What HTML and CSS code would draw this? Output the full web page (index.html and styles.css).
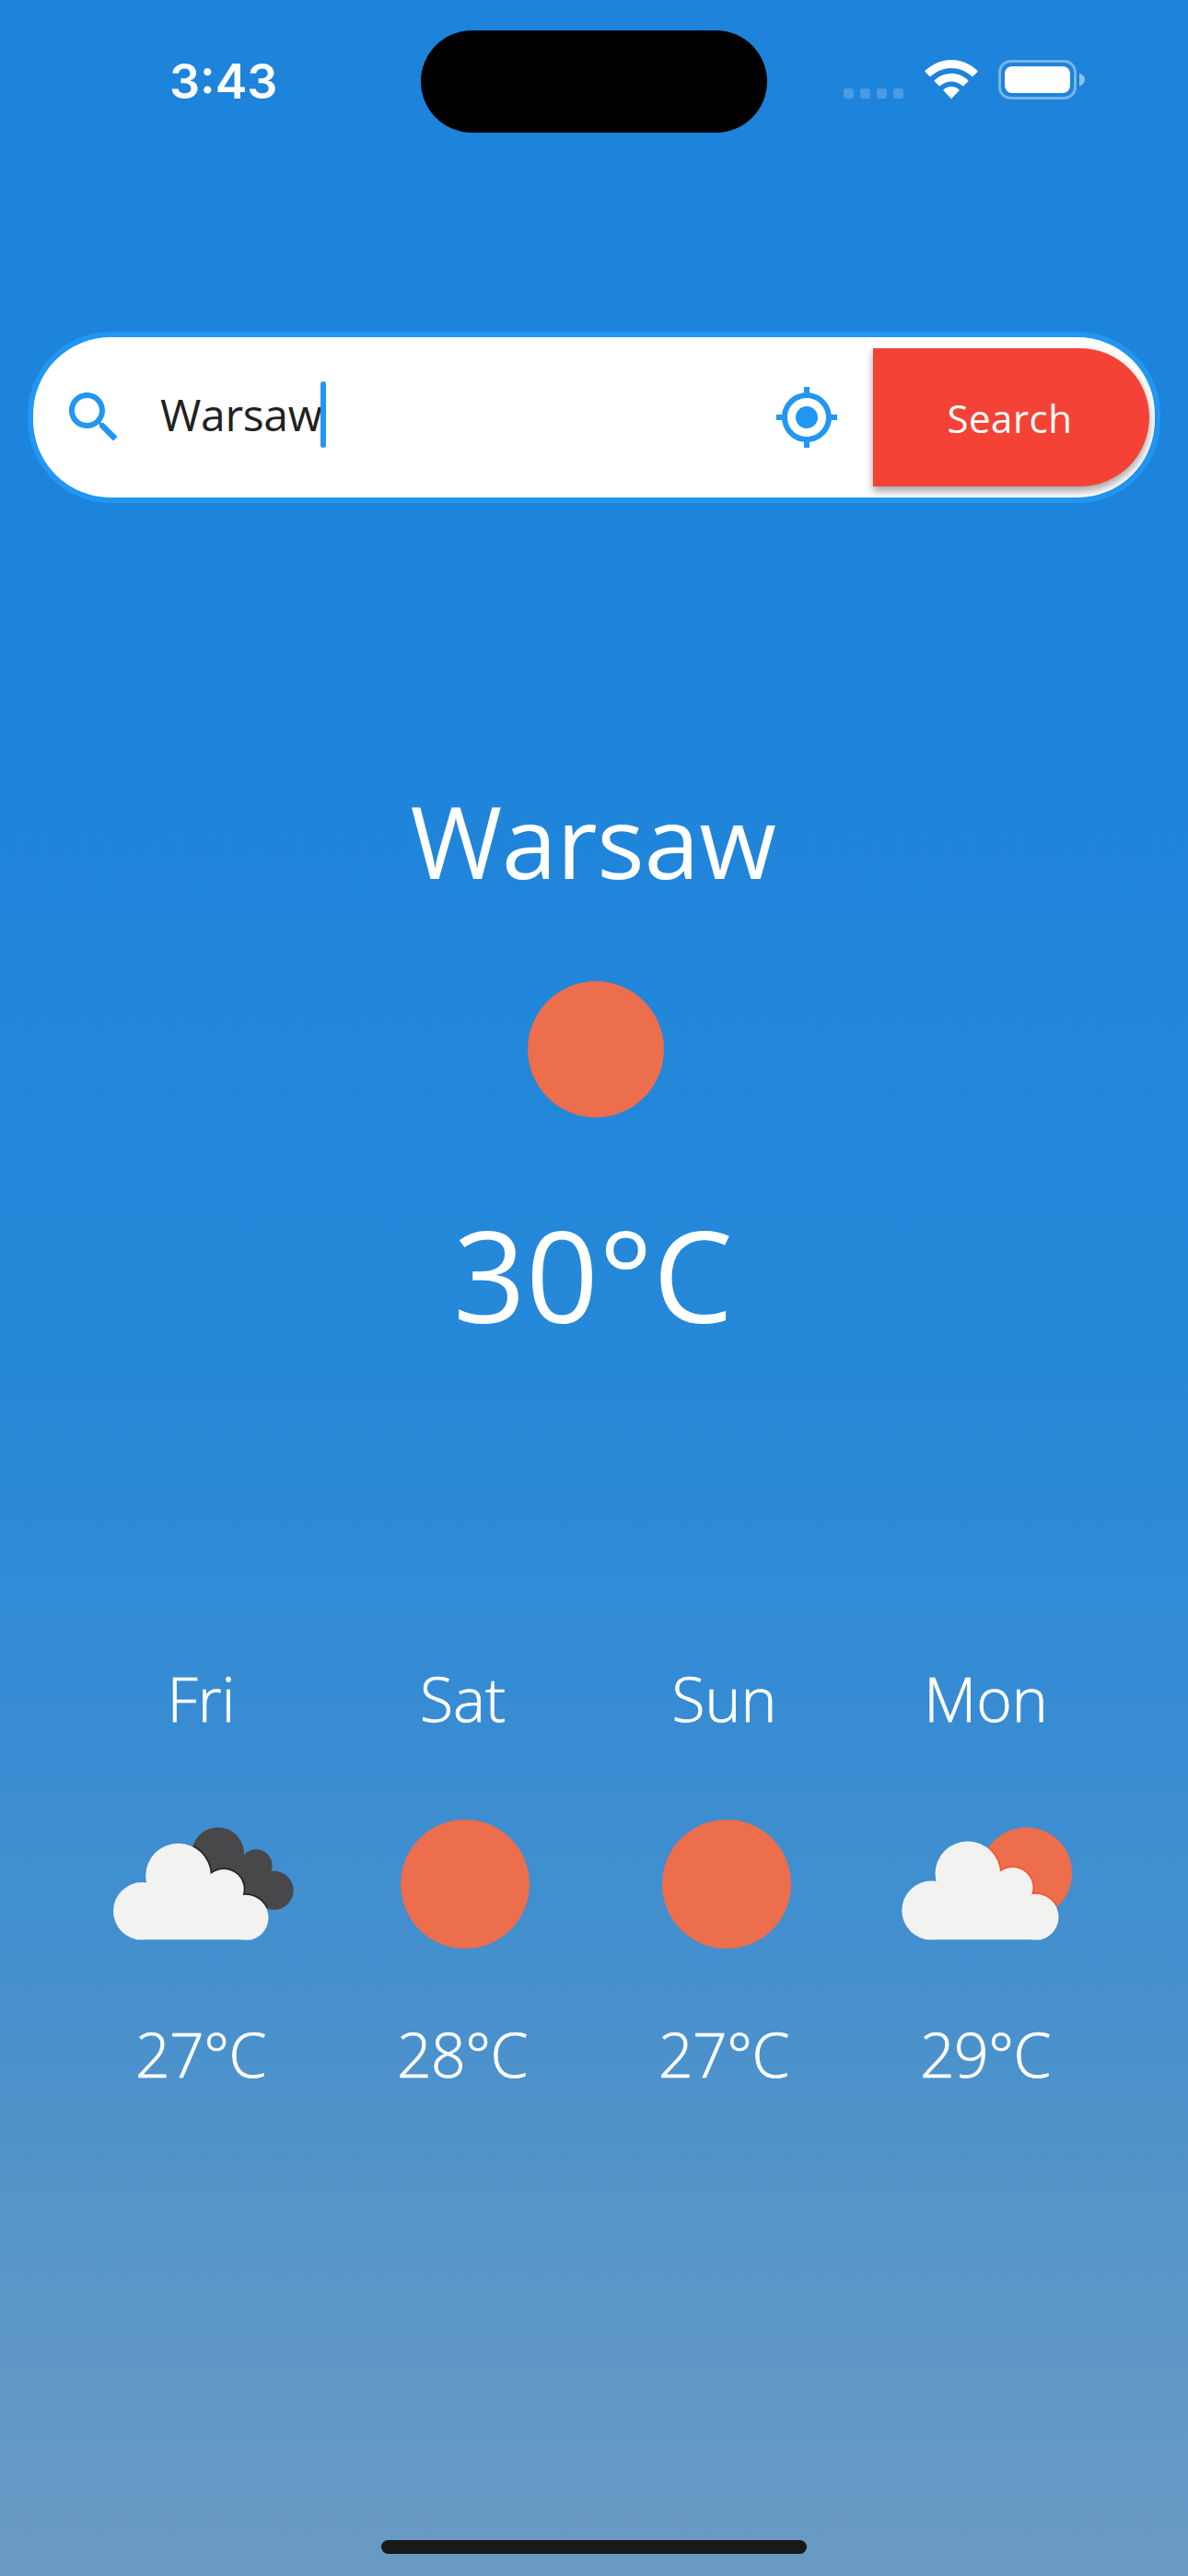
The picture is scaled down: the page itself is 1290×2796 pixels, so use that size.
FILE: index.html
```html
<!DOCTYPE html>
<html lang="en">
<head>
  <meta charset="utf-8">
  <title>Weather</title>
  <link rel="stylesheet" href="styles.css">
</head>
<body>
  <div class="screen">
    <header class="status">
      <time class="clock">3:43</time>
      <div class="island"></div>
      <div class="indicators">
        <div class="signal"><i></i><i></i><i></i><i></i></div>
        <svg class="wifi" width="58" height="43" viewBox="0 0 58 43" fill="#fff">
          <path d="M29 0C39.7 0 49.7 4.2 57.2 11.6Q58 12.4 57.2 13.2L52.7 17.8Q52 18.500 51.200 17.800C45 12 37.200 9 29 9C20.800 9 13 12 6.800 17.800Q6 18.500 5.300 17.800L.8 13.200Q0 12.400 .8 11.600C8.300 4.200 18.300 0 29 0Z"/>
          <path d="M29 14.700C35.800 14.700 42.200 17.300 47.100 21.900Q47.900 22.700 47.100 23.500L42.600 28Q41.900 28.800 41.100 28.100C37.700 25 33.500 23.400 29 23.400C24.500 23.400 20.300 25 16.900 28.100Q16.100 28.800 15.400 28L10.900 23.500Q10.100 22.700 10.900 21.900C15.800 17.300 22.200 14.700 29 14.700Z"/>
          <path d="M29 29C32 29 34.900 30.100 37.200 32Q38 32.700 37.300 33.500L29.700 41.600Q29 42.300 28.300 41.600L20.700 33.500Q20 32.700 20.800 32C23.100 30.100 26 29 29 29Z"/>
        </svg>
        <svg class="battery" width="95" height="43" viewBox="0 0 95 43">
          <rect x="1.500" y="1.500" width="82" height="40" rx="12" fill="none" stroke="#fff" stroke-opacity=".4" stroke-width="3"/>
          <rect x="7" y="7" width="71" height="29" rx="8" fill="#fff"/>
          <path d="M88 14.500Q94 17 94 21.500Q94 26 88 28.500Z" fill="#fff" fill-opacity=".5"/>
        </svg>
      </div>
    </header>

    <div class="search">
      <svg class="icon" viewBox="0 0 24 24"><path d="M15.500 14h-.79l-.28-.27C15.410 12.590 16 11.110 16 9.500 16 5.910 13.090 3 9.500 3S3 5.910 3 9.500 5.910 16 9.500 16c1.610 0 3.090-.59 4.230-1.570l.27.28v.79l5 4.990L20.490 19l-4.990-5zm-6 0C7.010 14 5 11.990 5 9.500S7.010 5 9.500 5 14 7.010 14 9.500 11.990 14 9.500 14z"/></svg>
      <div class="query"><span>Warsaw</span><i class="caret"></i></div>
      <svg class="icon" viewBox="0 0 24 24"><path d="M12 8c-2.210 0-4 1.790-4 4s1.790 4 4 4 4-1.790 4-4-1.790-4-4-4zm8.940 3c-.46-4.170-3.770-7.480-7.940-7.940V1h-2v2.060C6.830 3.520 3.520 6.830 3.060 11H1v2h2.060c.46 4.170 3.770 7.480 7.940 7.940V23h2v-2.060c4.170-.46 7.480-3.770 7.940-7.940H23v-2h-2.060zM12 19c-3.870 0-7-3.130-7-7s3.130-7 7-7 7 3.130 7 7-3.130 7-7 7z"/></svg>
      <button class="submit" type="button">Search</button>
    </div>

    <main class="current">
      <h1 class="city">Warsaw</h1>
      <div class="sun sun-large"></div>
      <p class="temp">30°C</p>
    </main>

    <section class="forecast">
      <article class="day">
        <h2>Fri</h2>
        <svg class="sky" width="216" height="150" viewBox="-10 0 216 150">
          <g fill="#48484a">
            <circle cx="113.600" cy="48.800" r="28.400"/>
            <circle cx="155.100" cy="61.800" r="17.500"/>
            <circle cx="174.700" cy="88.800" r="21"/>
            <path d="M113 48L155 61L175 89L168 108L120 90L90 70Z"/>
          </g>
          <!-- dark rim where the front cloud overlaps the back one -->
          <clipPath id="dark-cloud">
            <circle cx="113.600" cy="48.800" r="28"/>
            <circle cx="155.100" cy="61.800" r="17"/>
            <circle cx="174.700" cy="88.800" r="20.500"/>
            <path d="M113 48L155 61L175 89L168 108L120 90L90 70Z"/>
          </clipPath>
          <g clip-path="url(#dark-cloud)" fill="none" stroke="#262628" stroke-width="3.500">
            <circle cx="70.500" cy="73" r="35.300"/>
            <circle cx="120" cy="87.700" r="21.700"/>
            <circle cx="143.800" cy="118.500" r="24.700"/>
          </g>
          <clipPath id="base"><rect x="-10" y="0" width="216" height="142.500"/></clipPath>
          <g fill="#f2f2f1" clip-path="url(#base)">
            <circle cx="70.500" cy="73" r="35.300"/>
            <circle cx="31.300" cy="111.300" r="31.300"/>
            <circle cx="120" cy="87.700" r="21.700"/>
            <circle cx="143.800" cy="118.500" r="24.700"/>
            <path d="M24 142.500L31 100L70 70L120 80L144 110L151 142.500Z"/>
          </g>
        </svg>
        <p>27°C</p>
      </article>
      <article class="day">
        <h2>Sat</h2>
        <div class="sky"><div class="sun"></div></div>
        <p>28°C</p>
      </article>
      <article class="day">
        <h2>Sun</h2>
        <div class="sky"><div class="sun"></div></div>
        <p>27°C</p>
      </article>
      <article class="day">
        <h2>Mon</h2>
        <svg class="sky" width="216" height="150" viewBox="-19.500 0 216 150">
          <circle cx="130" cy="70" r="49.600" fill="#ec6e4c"/>
          <!-- saturated rim where the cloud overlaps the sun -->
          <clipPath id="behind-sun"><circle cx="130" cy="70" r="49"/></clipPath>
          <g clip-path="url(#behind-sun)" fill="none" stroke="#ee5a32" stroke-width="3.500">
            <circle cx="66.300" cy="70.800" r="35.300"/>
            <circle cx="115" cy="86" r="22"/>
            <circle cx="140" cy="117.800" r="25"/>
          </g>
          <g fill="#f2f2f1" clip-path="url(#base-sun)">
            <circle cx="66.300" cy="70.800" r="35.300"/>
            <circle cx="26.800" cy="110.600" r="32"/>
            <circle cx="115" cy="86" r="22"/>
            <circle cx="140" cy="117.800" r="25"/>
            <path d="M20 142.500L27 100L66 68L115 80L140 110L147 142.500Z"/>
          </g>
          <clipPath id="base-sun"><rect x="-19.500" y="0" width="216" height="142.500"/></clipPath>
        </svg>
        <p>29°C</p>
      </article>
    </section>

    <footer class="home"></footer>
  </div>
</body>
</html>
```
FILE: styles.css
```css
* { box-sizing: border-box; }

body { margin: 0; }

h1, h2, p { margin: 0; font-weight: 400; }

.screen {
  width: 1290px;
  height: 2796px;
  display: flex;
  flex-direction: column;
  align-items: center;
  color: #fff;
  font-family: "Open Sans", "Noto Sans", sans-serif;
  background: linear-gradient(#1d83db 0, #1d84db 560px, #2186da 1000px, #2688d8 1480px, #348bd4 1800px, #4690cd 2150px, #5a96c7 2480px, #6a9ac3 2796px);
}

.status {
  width: 100%;
  height: 144px;
  padding-top: 33px;
  display: grid;
  grid-template-columns: 457px 376px 457px;
}

.clock {
  padding: 25px 0 0 184px;
  font: 600 52px/62px Inter, sans-serif;
}

.island { height: 111px; border-radius: 56px; background: #000; }

.indicators {
  display: flex;
  align-items: flex-start;
  padding: 32px 0 0 83px;
}

.signal { display: flex; gap: 7px; padding-top: 31px; }
.signal i { width: 11px; height: 11px; border-radius: 3px; background: rgba(255, 255, 255, .2); }
.wifi { margin-left: 23px; }
.battery { margin-left: 22px; }

.search {
  width: 1230px;
  height: 186px;
  margin-top: 216px;
  padding: 0 6px 0 30px;
  display: flex;
  align-items: center;
  border: 6px solid #2196f3;
  border-radius: 90px;
  background: #fff;
}

.icon { width: 72px; height: 72px; flex: none; fill: #2196f3; }

.query {
  flex: 1;
  display: flex;
  align-items: center;
  padding-left: 36px;
  color: #212121;
  font-size: 48px;
  line-height: 72px;
  letter-spacing: -.3px;
}

.query span { margin-top: -6px; }

.caret {
  width: 6px;
  height: 72px;
  margin: -6px 0 0 -2px;
  border-radius: 3px;
  background: #2196f3;
}

.submit {
  width: 300px;
  height: 150px;
  margin-left: 36px;
  padding: 1px 3px 0 0;
  border: 0;
  border-radius: 0 75px 75px 0;
  background: #f44336;
  color: #fff;
  font: 400 42px/60px "Open Sans", sans-serif;
  letter-spacing: .5px;
  box-shadow: 0 6px 8px rgba(0, 0, 0, .26), 0 2px 10px rgba(0, 0, 0, .14);
}

.current {
  margin-top: 292px;
  display: flex;
  flex-direction: column;
  align-items: center;
}

.city { font-size: 108px; line-height: 150px; letter-spacing: -.3px; margin-right: 2px; }

.sun { width: 140px; height: 140px; border-radius: 50%; background: #ec6e4c; }
.sun-large { width: 148px; height: 148px; margin: 77px 0 0 4px; }

.temp { font-size: 138px; line-height: 180px; margin: 79px 2px 0 0; }

.forecast {
  margin-top: 326px;
  display: grid;
  grid-template-columns: repeat(4, 284px);
}

.day {
  display: flex;
  flex-direction: column;
  align-items: center;
  font-size: 66px;
  line-height: 90px;
  -webkit-text-stroke: .7px #fff;
}

.day h2 { font-size: inherit; font-weight: 300; margin-right: 1px; }
.day p { font-weight: 300; letter-spacing: -.7px; margin-right: 2px; }

.sky {
  height: 150px;
  margin: 75px 0 71px 3px;
  display: flex;
  align-items: center;
}

.sky .sun { margin-top: 14px; }

.home {
  width: 462px;
  height: 15px;
  margin: auto 0 24px;
  border-radius: 8px;
  background: #191919;
}
```
